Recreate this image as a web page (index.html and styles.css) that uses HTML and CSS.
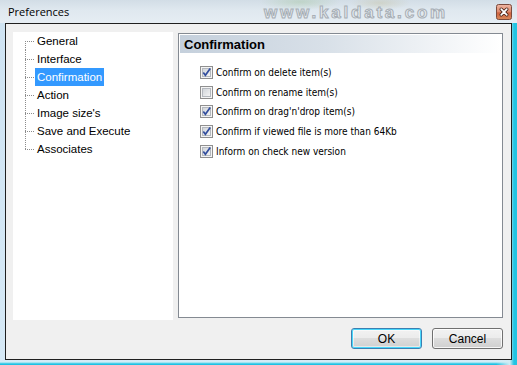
FILE: index.html
```html
<!DOCTYPE html>
<html>
<head>
<meta charset="utf-8">
<title>Preferences</title>
<link rel="stylesheet" href="styles.css">
</head>
<body>
<div class="window">
  <div class="titlebar">
    <span class="title">Preferences</span>
    <span class="watermark">www.kaldata.com</span>
    <button class="close" aria-label="Close">
      <svg width="16" height="16" viewBox="0 0 16 16">
        <defs>
          <linearGradient id="cg" x1="0" y1="0" x2="0" y2="1">
            <stop offset="0" stop-color="#efb7a4"/>
            <stop offset="0.5" stop-color="#df8a6d"/>
            <stop offset="0.55" stop-color="#cf6240"/>
            <stop offset="1" stop-color="#d98a5a"/>
          </linearGradient>
        </defs>
        <rect x="0.5" y="0.5" width="15" height="15" rx="2" fill="url(#cg)" stroke="#7b4a3c"/>
        <path d="M5.2 5.2 L10.8 10.8 M10.8 5.2 L5.2 10.8" stroke="#4a2418" stroke-width="3.4" stroke-linecap="round"/>
        <path d="M5.2 5.2 L10.8 10.8 M10.8 5.2 L5.2 10.8" stroke="#ffffff" stroke-width="1.7" stroke-linecap="round"/>
      </svg>
    </button>
  </div>
  <div class="client">
    <div class="main">
      <div class="tree">
        <ul class="tree-list">
          <li class="node first"><span class="label">General</span></li>
          <li class="node"><span class="label">Interface</span></li>
          <li class="node"><span class="label selected">Confirmation</span></li>
          <li class="node"><span class="label">Action</span></li>
          <li class="node"><span class="label">Image size's</span></li>
          <li class="node"><span class="label">Save and Execute</span></li>
          <li class="node last"><span class="label">Associates</span></li>
        </ul>
      </div>
      <div class="page">
        <div class="page-head">Confirmation</div>
        <div class="opts">
          <label class="opt">
            <svg class="cb" width="13" height="13" viewBox="0 0 13 13"><defs><linearGradient id="ig" x1="0" y1="0" x2="1" y2="1"><stop offset="0" stop-color="#cfd3d8"/><stop offset="1" stop-color="#f6f6f6"/></linearGradient></defs><rect x="0.5" y="0.5" width="12" height="12" fill="#f4f4f4" stroke="#8f8f8f"/><rect x="2.5" y="2.5" width="8" height="8" fill="url(#ig)" stroke="#b4b8be"/><path d="M3.3 6.4 L5.4 9.2 L10.2 2.6" fill="none" stroke="#324e9e" stroke-width="1.7"/></svg>
            <span>Confirm on delete item(s)</span>
          </label>
          <label class="opt">
            <svg class="cb" width="13" height="13" viewBox="0 0 13 13"><rect x="0.5" y="0.5" width="12" height="12" fill="#f4f4f4" stroke="#8f8f8f"/><rect x="2.5" y="2.5" width="8" height="8" fill="url(#ig)" stroke="#b4b8be"/></svg>
            <span>Confirm on rename item(s)</span>
          </label>
          <label class="opt">
            <svg class="cb" width="13" height="13" viewBox="0 0 13 13"><rect x="0.5" y="0.5" width="12" height="12" fill="#f4f4f4" stroke="#8f8f8f"/><rect x="2.5" y="2.5" width="8" height="8" fill="url(#ig)" stroke="#b4b8be"/><path d="M3.3 6.4 L5.4 9.2 L10.2 2.6" fill="none" stroke="#324e9e" stroke-width="1.7"/></svg>
            <span>Confirm on drag'n'drop item(s)</span>
          </label>
          <label class="opt">
            <svg class="cb" width="13" height="13" viewBox="0 0 13 13"><rect x="0.5" y="0.5" width="12" height="12" fill="#f4f4f4" stroke="#8f8f8f"/><rect x="2.5" y="2.5" width="8" height="8" fill="url(#ig)" stroke="#b4b8be"/><path d="M3.3 6.4 L5.4 9.2 L10.2 2.6" fill="none" stroke="#324e9e" stroke-width="1.7"/></svg>
            <span>Confirm if viewed file is more than 64Kb</span>
          </label>
          <label class="opt">
            <svg class="cb" width="13" height="13" viewBox="0 0 13 13"><rect x="0.5" y="0.5" width="12" height="12" fill="#f4f4f4" stroke="#8f8f8f"/><rect x="2.5" y="2.5" width="8" height="8" fill="url(#ig)" stroke="#b4b8be"/><path d="M3.3 6.4 L5.4 9.2 L10.2 2.6" fill="none" stroke="#324e9e" stroke-width="1.7"/></svg>
            <span>Inform on check new version</span>
          </label>
        </div>
      </div>
    </div>
    <div class="buttons">
      <button class="btn default">OK</button>
      <button class="btn">Cancel</button>
    </div>
  </div>
</div>
</body>
</html>
```
FILE: styles.css
```css
* { box-sizing: border-box; }
html, body { margin: 0; padding: 0; }
body { width: 517px; height: 365px; overflow: hidden; font-family: "Liberation Sans", Arial, sans-serif; }

.window {
  width: 517px;
  height: 365px;
  display: flex;
  flex-direction: column;
  background:
    linear-gradient(to right, rgba(255,255,255,0.0), rgba(255,255,255,0) 96%, #d0ecf4 98.6%, #22c4e2 99.4%),
    linear-gradient(to bottom, #d9e3ea 0, #e2ebf1 22px, #cfe3f2 23px, #d6e9f6 360px, #d0eef6 362px, #1dc2e3 364px);
}

.titlebar {
  height: 23px;
  display: flex;
  align-items: center;
  background:
    radial-gradient(ellipse 40px 8px at 300px 2px, rgba(150,190,140,0.35), transparent),
    radial-gradient(ellipse 30px 7px at 380px 3px, rgba(190,180,130,0.3), transparent),
    linear-gradient(to bottom, #d2dde6 0, #dfe8ef 10px, #e6edf3 23px);
}
.title {
  padding-left: 8px;
  font-family: "Open Sans", "Liberation Sans", sans-serif;
  font-size: 11px;
  color: #000;
}
.watermark {
  margin-left: auto;
  margin-right: 48px;
  font-family: "Liberation Sans", Arial, sans-serif;
  font-weight: bold;
  font-size: 17px;
  letter-spacing: 2.8px;
  color: #e6ebef;
  -webkit-text-stroke: 1px #a7aeb5;
  line-height: 1;
  padding-top: 1px;
}
.close {
  width: 16px;
  height: 16px;
  margin: 0 5px 0 0;
  padding: 0;
  border: 0;
  background: none;
  display: block;
}
.close svg { display: block; }

.client {
  margin: 0 5px;
  height: 337px;
  border: 1px solid #1f1f1f;
  background: #f0f0f0;
  padding: 8px 8px 0 7px;
  display: flex;
  flex-direction: column;
}

.main {
  display: flex;
  gap: 5px;
  align-items: flex-start;
}

.tree {
  width: 160px;
  height: 288px;
  background: #fff;
  padding-left: 12px;
}
.tree-list {
  list-style: none;
  margin: 0;
  padding: 0;
}
.node {
  height: 18px;
  display: flex;
  align-items: center;
  padding-left: 10px;
  font-family: "Liberation Sans", Arial, sans-serif;
  font-size: 11.5px;
  color: #000;
  background-image:
    repeating-linear-gradient(to bottom, #8c8c8c 0 1px, transparent 1px 2px),
    repeating-linear-gradient(to right, #8c8c8c 0 1px, transparent 1px 2px);
  background-repeat: no-repeat;
  background-size: 1px 100%, 10px 1px;
  background-position: 0 0, 0 9px;
}
.node.first {
  background-size: 1px 9px, 10px 1px;
  background-position: 0 9px, 0 9px;
}
.node.last {
  background-size: 1px 10px, 10px 1px;
  background-position: 0 0, 0 9px;
}
.label {
  height: 18px;
  line-height: 18px;
  padding: 0 2px;
}
.label.selected {
  background: #3399ff;
  color: #fff;
}

.page {
  width: 325px;
  height: 285px;
  margin-top: 1px;
  background: #fff;
  border: 1px solid #848a92;
  padding: 1px;
}
.page-head {
  height: 18px;
  padding-left: 4px;
  display: flex;
  align-items: center;
  font-family: "Liberation Sans", Arial, sans-serif;
  font-weight: bold;
  font-size: 13px;
  color: #000;
  background: linear-gradient(to right, #c5d0dc 0%, #d8e0e8 45%, #ffffff 100%);
}
.opts {
  padding: 10px 0 0 20px;
  display: flex;
  flex-direction: column;
}
.opt {
  height: 19.6px;
  display: flex;
  align-items: center;
  gap: 3px;
  font-family: "DejaVu Sans Condensed", "DejaVu Sans", sans-serif;
  font-size: 10px;
  color: #000;
}
.cb { display: block; flex: none; }

.buttons {
  margin-top: 8px;
  display: flex;
  justify-content: flex-end;
  gap: 10px;
}
.btn {
  width: 71px;
  height: 21px;
  padding: 0;
  border: 1px solid #707070;
  border-radius: 3px;
  background: linear-gradient(to bottom, #f2f2f2 0, #ebebeb 50%, #dddddd 50%, #cfcfcf 100%);
  box-shadow: inset 0 0 0 1px rgba(255,255,255,0.8);
  font-family: "Liberation Sans", Arial, sans-serif;
  font-size: 12px;
  color: #000;
}
.btn.default {
  border-color: #3c7fb1;
  box-shadow: inset 0 0 0 1px #48d7fb, inset 0 0 0 2px rgba(255,255,255,0.5);
}
```
